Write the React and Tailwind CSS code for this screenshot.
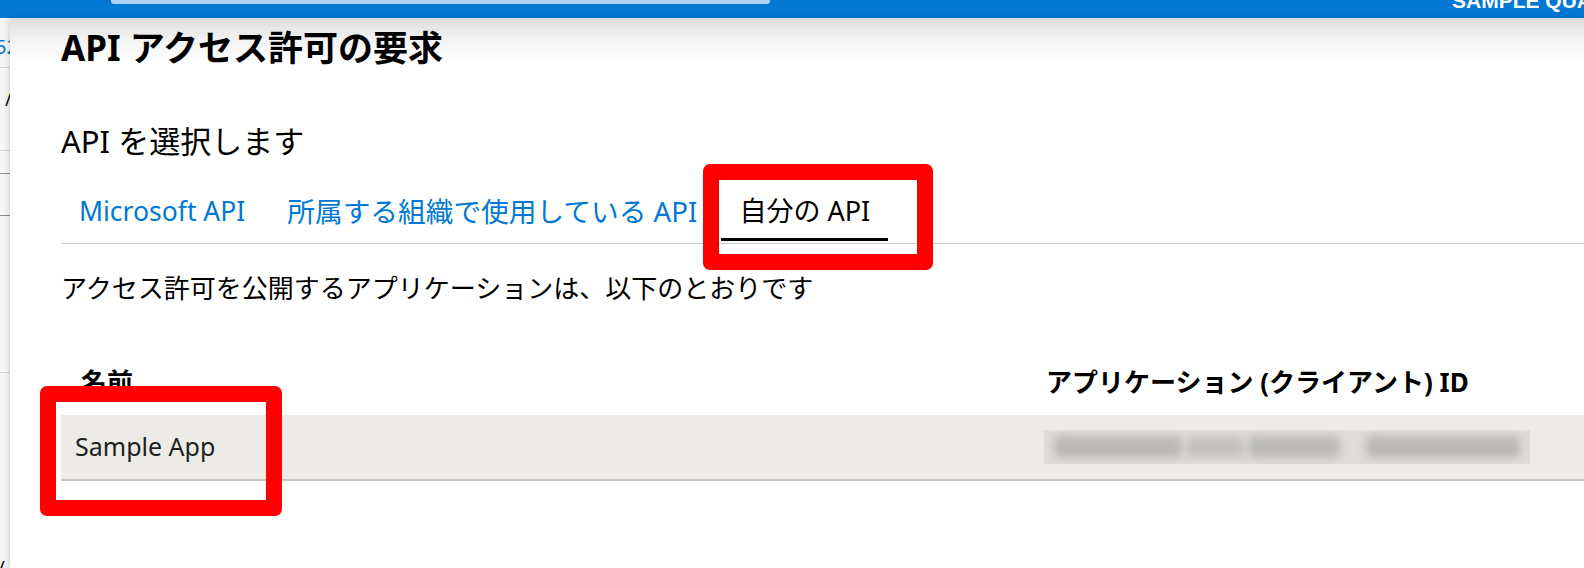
import React from "react";

function Strip() {
  return (
    <aside className="w-[10px] shrink-0 bg-[#f6f6f6] flex flex-col overflow-hidden">
      <div className="h-[50px] border-b border-[#d4d4d4] flex items-end pb-[10px]">
        <span className="ml-[-5px] text-[20px] leading-[20px] text-[#0078d4] whitespace-nowrap">52</span>
      </div>
      <div className="h-[83px] border-b border-[#d4d4d4] pt-[22px]">
        <span className="block ml-[5px] text-[18px] leading-[18px] text-black">/</span>
      </div>
      <div className="h-[23px] border-b border-[#8a8a8a]" />
      <div className="h-[42px] border-b border-[#8a8a8a]" />
      <div className="h-[157px] border-b border-[#d4d4d4]" />
      <div className="flex-1 flex items-end">
        <span className="block ml-[-2px] mb-[-8px] text-[18px] leading-[18px] text-black">/</span>
      </div>
    </aside>
  );
}

function Tab({ label, active, size }) {
  return (
    <div className="flex flex-col">
      <div
        className={
          "px-[18px] h-[36px] leading-[36px] whitespace-nowrap " +
          size +
          " " +
          (active ? "text-black" : "text-[#0078d4]")
        }
      >
        {label}
      </div>
      <div className={"mt-[9px] h-[3px] " + (active ? "bg-black" : "bg-transparent")} />
      <div className="h-[2px]" />
    </div>
  );
}

function BlurredId() {
  return (
    <div className="w-[486px] h-[34px] bg-[#dedcd9] overflow-hidden flex items-center pl-[10px]">
      <div className="w-[128px] h-[22px] bg-[#b9b8b5] blur-[4px] rounded-[6px]" />
      <div className="ml-[4px] w-[58px] h-[20px] bg-[#c2c1be] blur-[4px] rounded-[6px]" />
      <div className="ml-[4px] w-[92px] h-[22px] bg-[#bbbab7] blur-[4px] rounded-[6px]" />
      <div className="ml-[26px] w-[154px] h-[22px] bg-[#b9b8b5] blur-[4px] rounded-[6px]" />
    </div>
  );
}

export default function App() {
  return (
    <div className="w-[1584px] h-[568px] overflow-hidden bg-white flex flex-col relative font-['Noto_Sans','Noto_Sans_CJK_JP',sans-serif]">
      <header className="h-[18px] shrink-0 bg-[#0078d4] flex overflow-hidden">
        <div className="ml-[111px] w-[659px] h-[4px] bg-[#acd3f4] rounded-b-[3px]" />
        <div className="ml-auto w-[132px] overflow-hidden">
          <span className="block mt-[-9px] text-[21px] leading-[20px] font-bold text-white whitespace-nowrap font-['Liberation_Sans',sans-serif]">
            SAMPLE QUALITY
          </span>
        </div>
      </header>

      <div className="flex flex-1 min-h-0">
        <Strip />
        <main className="flex-1 min-w-0 pl-[51px] bg-[linear-gradient(to_bottom,#dcdcdc_0px,#f3f3f3_22px,#ffffff_44px)] shadow-[-2px_0_5px_rgba(0,0,0,0.12)] flex flex-col">
          <h1 className="mt-[9px] h-[42px] leading-[42px] text-[35px] font-bold text-black whitespace-nowrap">
            API アクセス許可の要求
          </h1>

          <h2 className="mt-[53px] h-[38px] leading-[38px] text-[31px] text-black whitespace-nowrap">
            API を選択します
          </h2>

          <div className="mt-[33px] flex gap-[6px] border-b border-[#cfcecd]">
            <Tab label="Microsoft API" size="text-[26.5px]" />
            <Tab label="所属する組織で使用している API" size="text-[27.7px]" />
            <Tab label="自分の API" size="text-[27px]" active />
          </div>

          <p className="mt-[27px] h-[34px] leading-[34px] text-[26px] text-black whitespace-nowrap">
            アクセス許可を公開するアプリケーションは、以下のとおりです
          </p>

          <div className="mt-[61px] grid grid-cols-[983px_1fr] h-[32px] leading-[32px] text-[26px] font-bold text-black whitespace-nowrap">
            <div className="pl-[20px]">名前</div>
            <div className="pl-[2px]">アプリケーション (クライアント) ID</div>
          </div>

          <div className="mt-[17px] grid grid-cols-[983px_1fr] h-[66px] bg-[#edebe8] border-b-2 border-[#c8c6c4] items-center">
            <div className="pl-[14px] text-[25px] text-[#201f1e] whitespace-nowrap">Sample App</div>
            <div>
              <BlurredId />
            </div>
          </div>
        </main>
      </div>

      <div className="absolute left-[703px] top-[164px] w-[230px] h-[106px] border-[16px] border-[#ff0000] rounded-[7px]" />
      <div className="absolute left-[40px] top-[386px] w-[242px] h-[130px] border-[16px] border-[#ff0000] rounded-[7px]" />
    </div>
  );
}
